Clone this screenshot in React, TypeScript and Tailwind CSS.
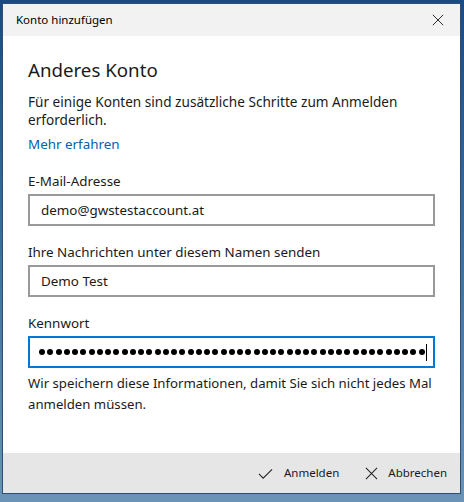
import React from 'react';

const font = { fontFamily: '"Noto Sans", "Open Sans", sans-serif' };

function CheckIcon() {
  return (
    <svg width="15" height="15" viewBox="0 0 16 16" fill="none" stroke="#222" strokeWidth="1.1">
      <path d="M1 8.5 L5.5 13 L15 3.5" />
    </svg>
  );
}

function CloseIcon({ size = 14 }: { size?: number }) {
  return (
    <svg width={size} height={size} viewBox="0 0 14 14" fill="none" stroke="#222" strokeWidth="1.1">
      <path d="M1 1 L13 13 M13 1 L1 13" />
    </svg>
  );
}

function Field({ label, value, focused }: { label: string; value?: string; focused?: boolean }) {
  return (
    <div className="flex flex-col">
      <div className="text-[13.4px] leading-[19px] text-[#1a1a1a]">{label}</div>
      <div
        className={`mt-[3px] h-[32px] border-2 flex items-center px-[11px] ${
          focused ? 'border-[#0078d7]' : 'border-[#999999]'
        }`}
      >
        {value !== undefined ? (
          <span className="text-[13.4px] text-[#1a1a1a]">{value}</span>
        ) : (
          <div className="flex items-center -ml-[2px]">
            <div className="flex items-center gap-[2.25px]">
              {Array.from({ length: 47 }).map((_, i) => (
                <div key={i} className="w-[6px] h-[6px] rounded-full bg-black" />
              ))}
            </div>
            <div className="ml-[1px] w-[1px] h-[17px] bg-black" />
          </div>
        )}
      </div>
    </div>
  );
}

export default function App() {
  return (
    <div
      className="w-[464px] h-[502px] bg-gradient-to-b from-[#1b4a82] via-[#3f6f9d] to-[#6b93b6] relative overflow-hidden"
      style={font}
    >
      <div className="absolute left-[3px] top-[4px] w-[457px] h-[489px] flex flex-col bg-white shadow-[0_0_0_1px_#2c4f75]">
        {/* Title bar */}
        <div className="h-[32px] bg-[#f2f2f2] flex items-center justify-between pl-[13px] pr-[16px]">
          <span className="text-[11.5px] text-black">Konto hinzufügen</span>
          <CloseIcon size={12} />
        </div>

        {/* Content */}
        <div className="flex-1 flex flex-col px-[25px] pt-[20px]">
          <div className="text-[18.7px] leading-[27px] text-[#1a1a1a]">Anderes Konto</div>
          <div className="mt-[10px] text-[13.6px] leading-[18px] text-[#1a1a1a]">
            Für einige Konten sind zusätzliche Schritte zum Anmelden erforderlich.
          </div>
          <div className="mt-[6px] text-[13.4px] leading-[19px] text-[#0063b1]">Mehr erfahren</div>

          <div className="mt-[18px] flex flex-col gap-[17px]">
            <Field label="E-Mail-Adresse" value="demo@gwstestaccount.at" />
            <Field label="Ihre Nachrichten unter diesem Namen senden" value="Demo Test" />
            <Field label="Kennwort" focused />
          </div>

          <div className="mt-[5px] text-[13.2px] leading-[21px] text-[#1a1a1a]">
            Wir speichern diese Informationen, damit Sie sich nicht jedes Mal anmelden müssen.
          </div>
        </div>

        {/* Footer */}
        <div className="h-[40px] bg-[#e6e6e6] flex items-center justify-end pr-[13px] gap-[26px]">
          <div className="flex items-center gap-[11px]">
            <CheckIcon />
            <span className="text-[11.5px] text-[#1a1a1a]">Anmelden</span>
          </div>
          <div className="flex items-center gap-[10px]">
            <CloseIcon size={13} />
            <span className="text-[11.5px] text-[#1a1a1a]">Abbrechen</span>
          </div>
        </div>
      </div>
    </div>
  );
}
